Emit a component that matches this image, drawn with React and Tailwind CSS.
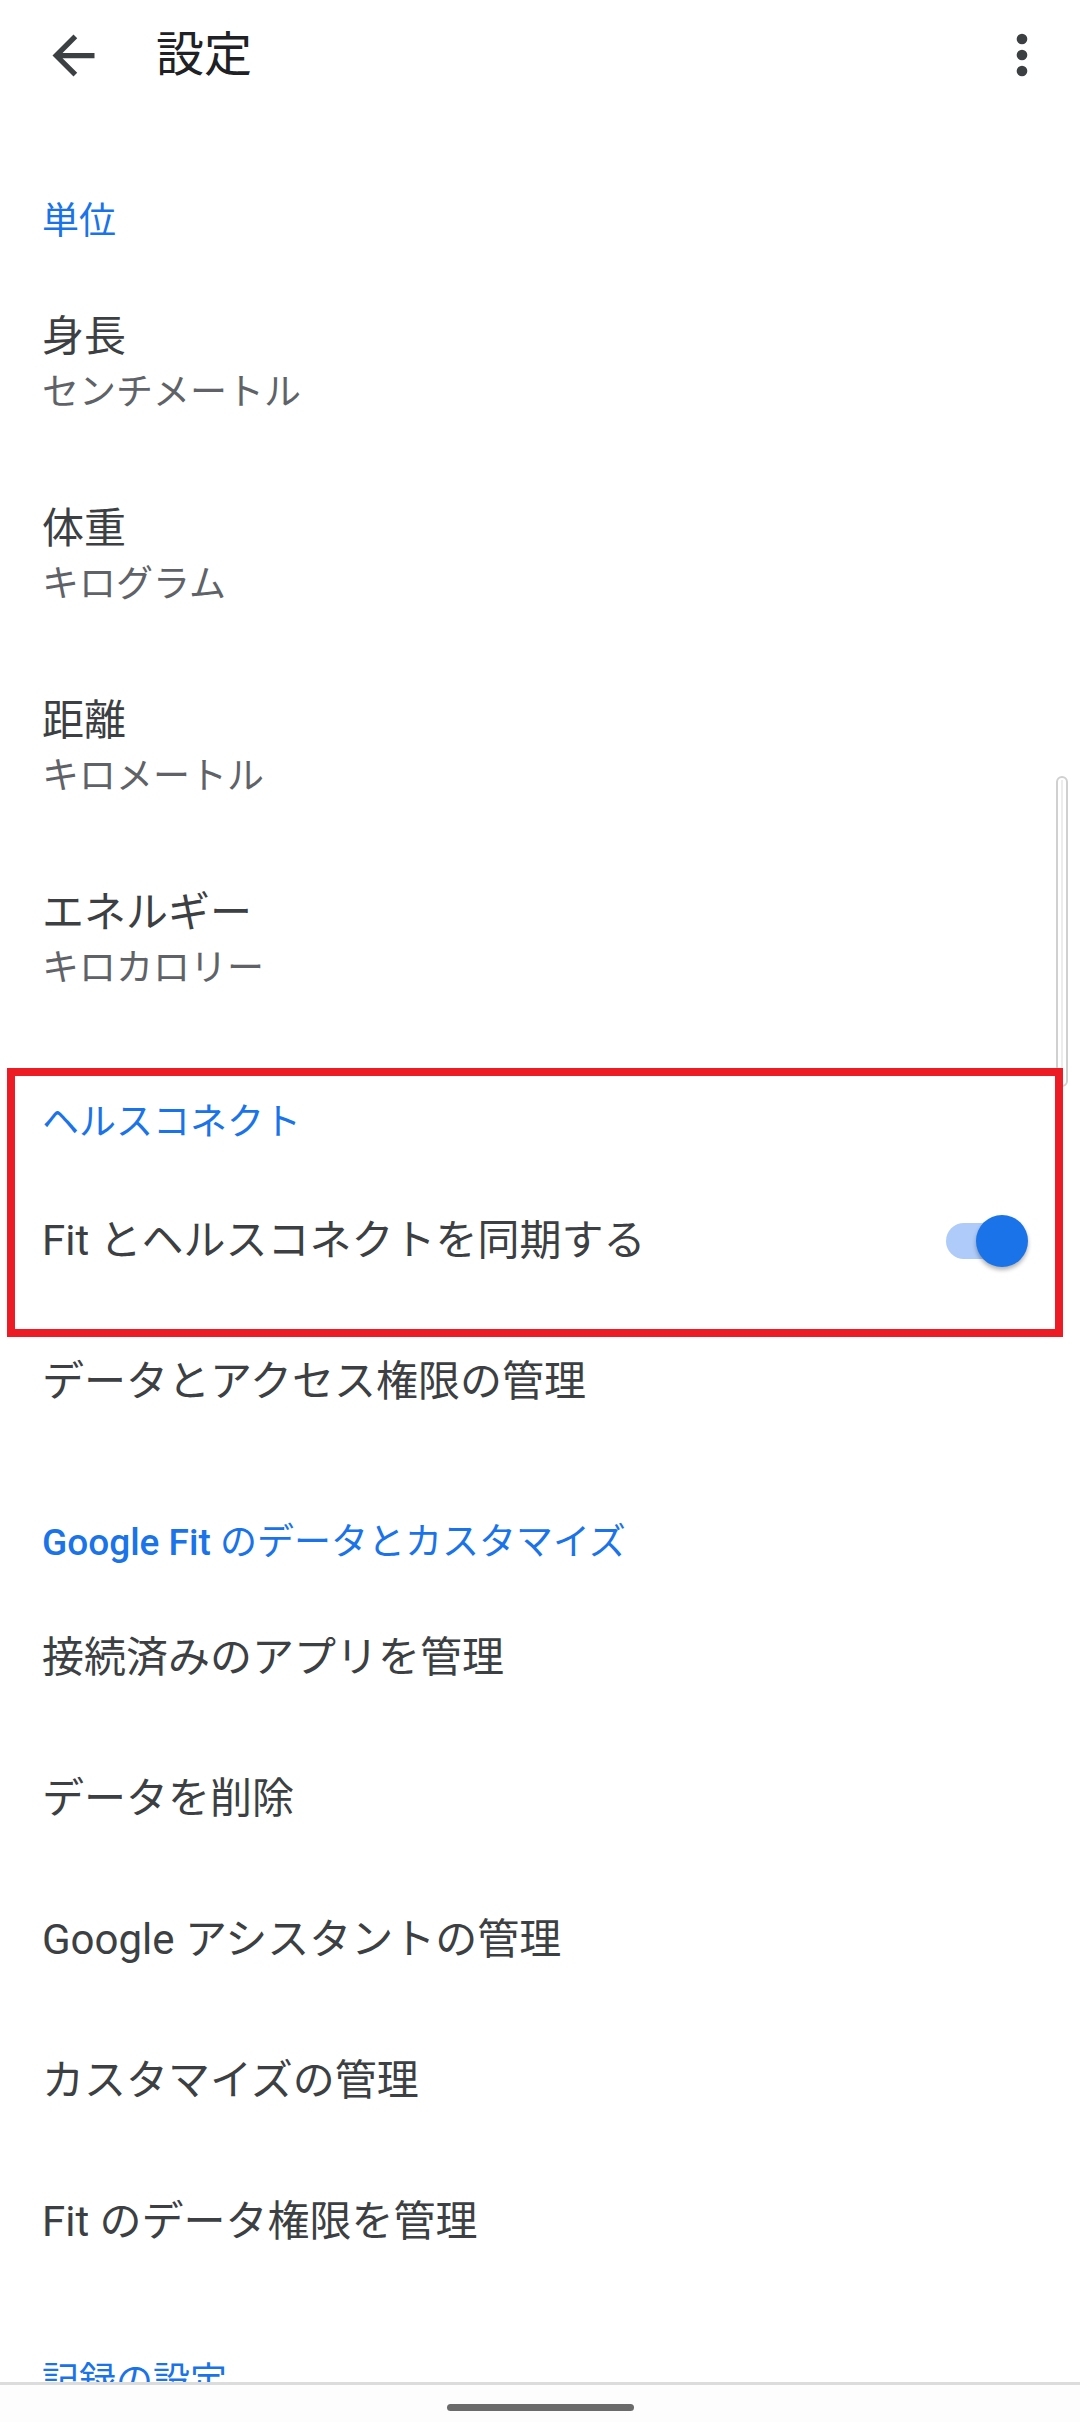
import React, { useState } from "react";

const ArrowBack = () => (
  <svg viewBox="0 0 24 24" className="w-[63px] h-[63px]" fill="#3c4043">
    <path d="M20 11H7.83l5.59-5.59L12 4l-8 8 8 8 1.41-1.41L7.83 13H20v-2z" />
  </svg>
);

const MoreVert = () => (
  <svg viewBox="0 0 24 24" className="w-[64px] h-[64px]" fill="#3c4043">
    <circle cx="12" cy="6" r="2" />
    <circle cx="12" cy="12" r="2" />
    <circle cx="12" cy="18" r="2" />
  </svg>
);

const Category = ({ children, pt, pb }) => (
  <div className={`pl-[42px] ${pt} ${pb}`}>
    <p className="text-[37px] leading-[48px] text-[#1a73e8]">{children}</p>
  </div>
);

const TwoLine = ({ title, sub }) => (
  <div className="h-[192px] pl-[42px] flex flex-col justify-center">
    <p className="text-[42px] leading-[56px] text-[#3c4043]">{title}</p>
    <p className="text-[37px] leading-[56px] text-[#5f6368]">{sub}</p>
  </div>
);

const Row = ({ title, children }) => (
  <div className="h-[141px] pl-[42px] flex items-center justify-between">
    <p className="text-[42px] leading-[56px] text-[#3c4043]">{title}</p>
    {children}
  </div>
);

const Switch = ({ on, onToggle }) => (
  <button onClick={onToggle} className="relative w-[82px] h-[52px] mr-[52px] cursor-pointer">
    <span
      className={`absolute left-0 top-[8px] w-[74px] h-[36px] rounded-full ${
        on ? "bg-[#aecbfa]" : "bg-[#bdc1c6]"
      }`}
    />
    <span
      className={`absolute top-0 w-[52px] h-[52px] rounded-full shadow-[0_3px_4px_rgba(0,0,0,0.3)] ${
        on ? "left-[30px] bg-[#1a73e8]" : "left-[-8px] bg-[#f1f3f4]"
      }`}
    />
  </button>
);

const App = () => {
  const [sync, setSync] = useState(true);

  return (
    <div className="relative h-[2422px] w-full overflow-hidden bg-white flex flex-col font-['Roboto','Noto_Sans_CJK_JP',sans-serif]">
      <header className="h-[110px] shrink-0 flex items-center pl-[42px] pr-[26px]">
        <ArrowBack />
        <h1 className="ml-[51px] text-[48px] leading-[56px] text-[#202124]">設定</h1>
        <div className="ml-auto">
          <MoreVert />
        </div>
      </header>

      <main className="flex-1 overflow-hidden pt-[4px]">
        <Category pt="pt-[84px]" pb="pb-[23px]">単位</Category>
        <TwoLine title="身長" sub="センチメートル" />
        <TwoLine title="体重" sub="キログラム" />
        <TwoLine title="距離" sub="キロメートル" />
        <TwoLine title="エネルギー" sub="キロカロリー" />

        <Category pt="pt-[62px]" pb="pb-[23px]">ヘルスコネクト</Category>
        <Row title="Fit とヘルスコネクトを同期する">
          <Switch on={sync} onToggle={() => setSync(!sync)} />
        </Row>
        <Row title="データとアクセス権限の管理" />

        <Category pt="pt-[67px]" pb="pb-[20px]">
          <span className="font-medium">Google Fit</span> のデータとカスタマイズ
        </Category>
        <Row title="接続済みのアプリを管理" />
        <Row title="データを削除" />
        <Row title="Google アシスタントの管理" />
        <Row title="カスタマイズの管理" />
        <Row title="Fit のデータ権限を管理" />

        <Category pt="pt-[66px]" pb="pb-[20px]">記録の設定</Category>
      </main>

      <nav className="h-[40px] shrink-0 border-t-[3px] border-[#dcdcdc] bg-[#fdfdfd] flex justify-center pt-[19px]">
        <div className="w-[187px] h-[7px] rounded-full bg-[#6b6b6b]" />
      </nav>

      {/* scroll indicator */}
      <div className="absolute left-[1056px] top-[776px] w-[12px] h-[311px] rounded-full border-2 border-[#d0d0d0] bg-white">
        <div className="mx-auto mt-[2px] w-[2px] h-[calc(100%-4px)] bg-[#ececec]" />
      </div>

      {/* highlight box */}
      <div className="absolute left-[7px] top-[1068px] w-[1056px] h-[269px] border-[8px] border-[#ed1c24]" />
    </div>
  );
};

export default App;
